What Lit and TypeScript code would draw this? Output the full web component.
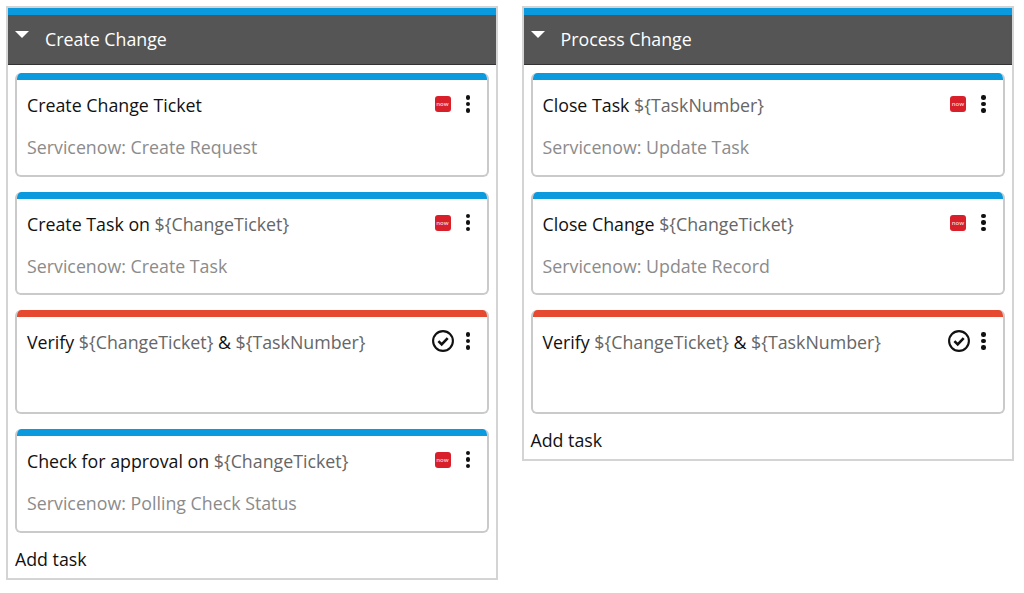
import { LitElement, html, css, svg } from "lit";
import { customElement } from "lit/decorators.js";

type Part = { t: string; v?: boolean };
type Task = { title: Part[]; sub?: string; kind: "now" | "check" };
type Col = { name: string; tasks: Task[] };

const p = (t: string): Part => ({ t });
const v = (t: string): Part => ({ t, v: true });

const cols: Col[] = [
  {
    name: "Create Change",
    tasks: [
      { title: [p("Create Change Ticket")], sub: "Servicenow: Create Request", kind: "now" },
      { title: [p("Create Task on "), v("${ChangeTicket}")], sub: "Servicenow: Create Task", kind: "now" },
      { title: [p("Verify "), v("${ChangeTicket}"), p(" & "), v("${TaskNumber}")], kind: "check" },
      { title: [p("Check for approval on "), v("${ChangeTicket}")], sub: "Servicenow: Polling Check Status", kind: "now" },
    ],
  },
  {
    name: "Process Change",
    tasks: [
      { title: [p("Close Task "), v("${TaskNumber}")], sub: "Servicenow: Update Task", kind: "now" },
      { title: [p("Close Change "), v("${ChangeTicket}")], sub: "Servicenow: Update Record", kind: "now" },
      { title: [p("Verify "), v("${ChangeTicket}"), p(" & "), v("${TaskNumber}")], kind: "check" },
    ],
  },
];

const checkIcon = svg`<svg class="check" width="22" height="22" viewBox="0 0 22 22" fill="none"><circle cx="11" cy="11" r="9.9" stroke="#111" stroke-width="2.1"/><path d="M6.4 11.2l3.3 3.3 6-6.4" stroke="#111" stroke-width="2.6"/></svg>`;

@customElement("app-root")
export class AppRoot extends LitElement {
  static styles = css`
    :host {
      display: block;
      width: 1024px;
      height: 593px;
      background: #fff;
      overflow: hidden;
      font-family: "Open Sans", sans-serif;
      font-size: 17.8px;
      color: #111;
    }
    .board {
      display: flex;
      align-items: flex-start;
      gap: 23.5px;
      padding: 6px 0 0 6px;
    }
    .col {
      box-sizing: border-box;
      width: 492px;
      border: 2px solid #d4d4d4;
      background: #fff;
    }
    .head {
      box-sizing: border-box;
      height: 57px;
      background: #555;
      border-top: 7px solid #0b9ade;
      border-bottom: 1px solid #333;
      color: #fff;
      display: flex;
      align-items: center;
      padding: 0 0 2px 7px;
      font-size: 17.8px;
    }
    .caret {
      width: 0;
      height: 0;
      border-left: 7px solid transparent;
      border-right: 7px solid transparent;
      border-top: 7px solid #fff;
      margin: -8px 16px 0 0;
    }
    .list {
      display: flex;
      flex-direction: column;
      gap: 15px;
      padding: 8px 7px 0;
    }
    .card {
      box-sizing: border-box;
      height: 103.67px;
      border: 2px solid #cacaca;
      border-top: 0;
      border-radius: 6px;
      overflow: hidden;
      background: #fff;
    }
    .bar { height: 7px; margin: 0 -2px; }
    .bar.blue { background: #0b9ade; }
    .bar.red { background: #e5492f; }
    .row {
      display: flex;
      align-items: flex-start;
      height: 37px;
      padding: 13px 0 0 10px;
      box-sizing: border-box;
      line-height: 24px;
    }
    .title { flex: 1; white-space: pre; }
    .var { color: #666; }
    .sub { color: #8b8b8b; padding: 18.3px 0 0 10px; line-height: 24px; }
    .icon { width: 24px; display: flex; justify-content: center; }
    .now {
      width: 16px;
      height: 16px;
      margin: 3px 1px 0 0;
      border-radius: 3px;
      background: #d9202a;
      color: #f3d5d6;
      font-size: 6px;
      font-weight: 600;
      line-height: 16px;
      text-align: center;
    }
    .check { display: block; margin-top: 0; }
    .dots {
      width: 26px;
      display: flex;
      flex-direction: column;
      align-items: center;
      gap: 2px;
      padding-top: 2px;
      margin-right: 6px;
    }
    .dots i { width: 4.5px; height: 4.5px; border-radius: 50%; background: #111; }
    .add { padding: 14px 7px 7px; line-height: 24px; }
  `;

  private card(t: Task) {
    return html`<div class="card">
      <div class="bar ${t.kind === "now" ? "blue" : "red"}"></div>
      <div class="row">
        <div class="title">${t.title.map((x) => (x.v ? html`<span class="var">${x.t}</span>` : x.t))}</div>
        <div class="icon">${t.kind === "now" ? html`<div class="now">now</div>` : checkIcon}</div>
        <div class="dots"><i></i><i></i><i></i></div>
      </div>
      ${t.sub ? html`<div class="sub">${t.sub}</div>` : ""}
    </div>`;
  }

  render() {
    return html`<div class="board">
      ${cols.map(
        (c) => html`<section class="col">
          <div class="head"><span class="caret"></span><span>${c.name}</span></div>
          <div class="list">${c.tasks.map((t) => this.card(t))}</div>
          <div class="add">Add task</div>
        </section>`
      )}
    </div>`;
  }
}
